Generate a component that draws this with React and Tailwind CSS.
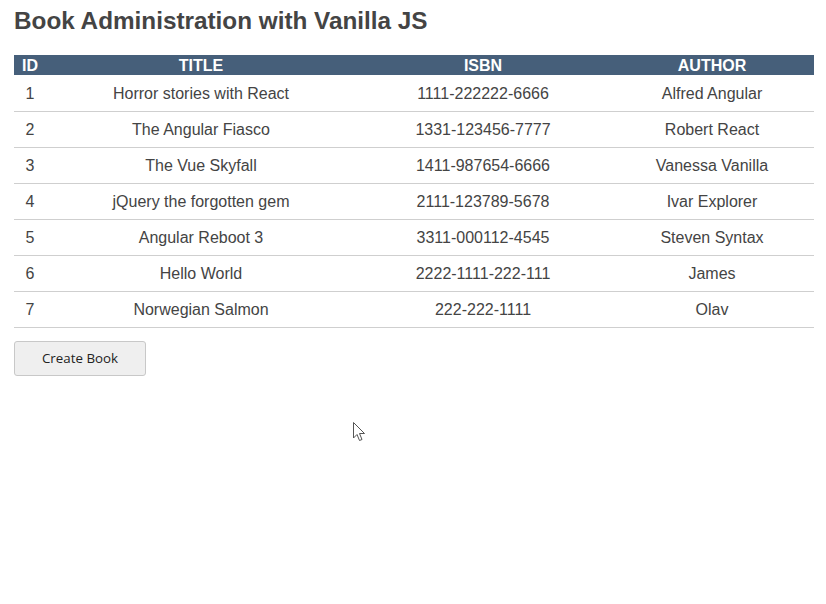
const books = [
  { id: 1, title: 'Horror stories with React', isbn: '1111-222222-6666', author: 'Alfred Angular' },
  { id: 2, title: 'The Angular Fiasco', isbn: '1331-123456-7777', author: 'Robert React' },
  { id: 3, title: 'The Vue Skyfall', isbn: '1411-987654-6666', author: 'Vanessa Vanilla' },
  { id: 4, title: 'jQuery the forgotten gem', isbn: '2111-123789-5678', author: 'Ivar Explorer' },
  { id: 5, title: 'Angular Reboot 3', isbn: '3311-000112-4545', author: 'Steven Syntax' },
  { id: 6, title: 'Hello World', isbn: '2222-1111-222-111', author: 'James' },
  { id: 7, title: 'Norwegian Salmon', isbn: '222-222-1111', author: 'Olav' },
];

export default function App() {
  return (
    <div className="relative min-h-[604px] bg-white px-[14px] pt-[6px] font-['Liberation_Sans',Arial,sans-serif] text-[#444]">
      <h1 className="text-[24.3px] font-bold leading-[30px] text-[#444]">Book Administration with Vanilla JS</h1>

      <table className="mt-[19px] w-[800px] border-collapse text-[16px] table-fixed">
        <colgroup>
          <col className="w-[32px]" />
          <col className="w-[310px]" />
          <col className="w-[254px]" />
          <col className="w-[204px]" />
        </colgroup>
        <thead>
          <tr className="bg-[#465f7a] text-white">
            <th className="h-[20px] p-0 pt-[1px] text-center font-bold leading-[19px]">ID</th>
            <th className="h-[20px] p-0 pt-[1px] text-center font-bold leading-[19px]">TITLE</th>
            <th className="h-[20px] p-0 pt-[1px] text-center font-bold leading-[19px]">ISBN</th>
            <th className="h-[20px] p-0 pt-[1px] text-center font-bold leading-[19px]">AUTHOR</th>
          </tr>
        </thead>
        <tbody>
          {books.map((b) => (
            <tr key={b.id} className="border-b border-[#cfcfcf]">
              <td className="h-[36px] p-0 pt-[2px] text-center align-middle">{b.id}</td>
              <td className="h-[36px] p-0 pt-[2px] text-center align-middle">{b.title}</td>
              <td className="h-[36px] p-0 pt-[2px] text-center align-middle">{b.isbn}</td>
              <td className="h-[36px] p-0 pt-[2px] text-center align-middle">{b.author}</td>
            </tr>
          ))}
        </tbody>
      </table>

      <button className="mt-[13px] h-[35px] w-[132px] rounded-[3px] border border-[#c8c8c8] bg-[#efefef] pt-[2px] font-['Open_Sans','Noto_Sans',sans-serif] text-[13.33px] text-[#222]">
        Create Book
      </button>

      {/* mouse pointer captured in the screenshot */}
      <svg className="absolute left-[352px] top-[421px]" width="14" height="22" viewBox="0 0 14 22">
        <path d="M1.5 1.5 L1.5 17 L5 13.5 L7.5 19.5 L10 18.5 L7.5 12.5 L12.5 12.5 Z" fill="white" stroke="#555" strokeWidth="1" strokeLinejoin="round" />
      </svg>
    </div>
  );
}
